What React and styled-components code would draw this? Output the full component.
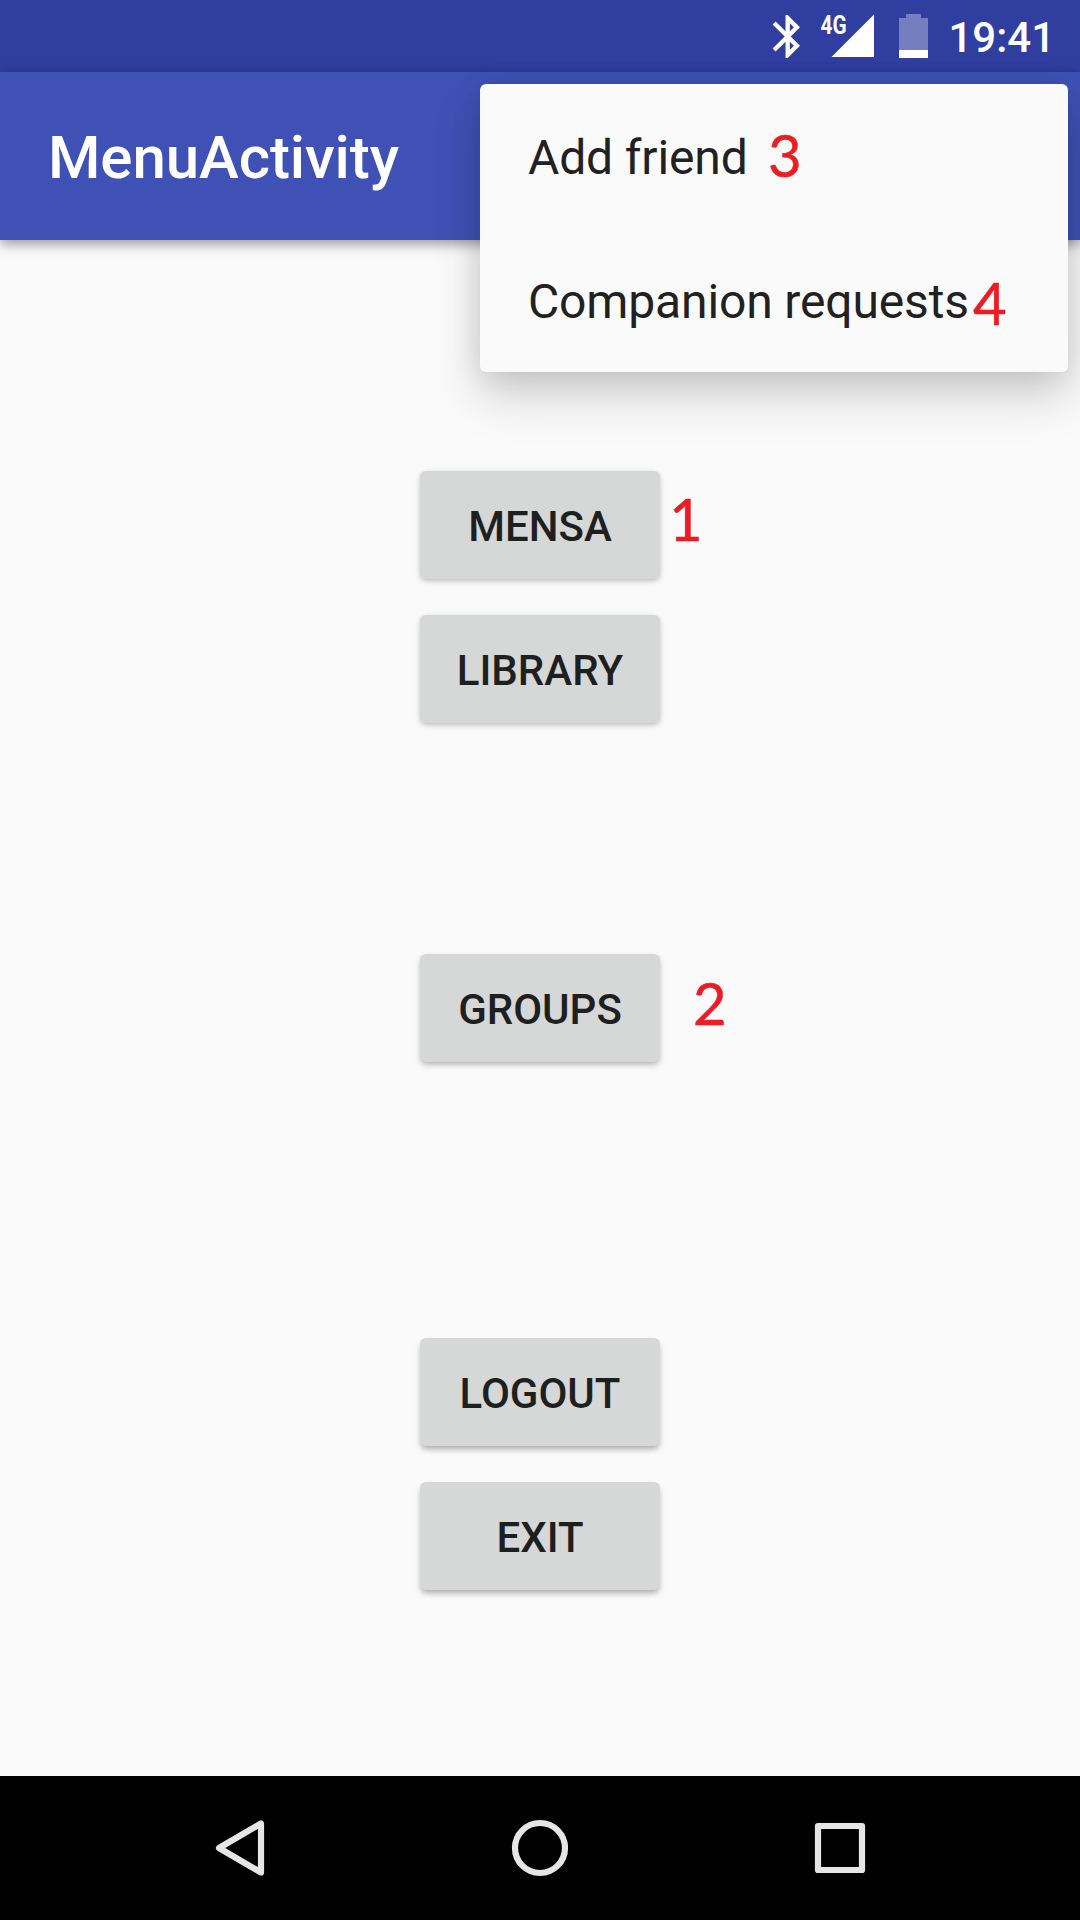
import React from "react";
import styled, { createGlobalStyle } from "styled-components";

const Global = createGlobalStyle`
  * { box-sizing: border-box; }
  html, body { margin: 0; padding: 0; background: #fafafa; }
  body { font-family: Roboto, "Noto Sans", sans-serif; }
  button { font: inherit; border: 0; margin: 0; }
`;

const Screen = styled.div`
  position: relative;
  display: flex;
  flex-direction: column;
  width: 1080px;
  height: 1920px;
  overflow: hidden;
  background: #fafafa;
`;

const StatusBar = styled.header`
  display: flex;
  align-items: center;
  justify-content: flex-end;
  flex: none;
  height: 72px;
  padding-right: 25px;
  background: #303f9f;
`;

const StatusIcon = styled.svg`
  display: block;
  flex: none;
  margin-right: ${(p) => p.$gap}px;
`;

const Clock = styled.time`
  padding-top: 3px;
  font-size: 42px;
  font-weight: 500;
  line-height: 69px;
  color: #fff;
`;

const NetworkLabel = styled.text`
  font-family: Roboto, sans-serif;
  font-size: 26px;
  font-weight: 700;
  fill: #fff;
`;

const AppBar = styled.div`
  display: flex;
  align-items: center;
  flex: none;
  height: 168px;
  padding: 4px 0 0 48px;
  background: #3f51b5;
  box-shadow: 0 4px 12px rgba(0, 0, 0, 0.4);
`;

const Title = styled.h1`
  margin: 0;
  font-size: 60px;
  font-weight: 500;
  line-height: 70px;
  letter-spacing: -0.1px;
  color: #fff;
`;

const Content = styled.main`
  display: flex;
  flex-direction: column;
  align-items: center;
  flex: 1;
  padding-top: 231px;
`;

const ButtonGroup = styled.section`
  display: flex;
  flex-direction: column;
  gap: 36px;
  margin-bottom: ${(p) => p.$after || 0}px;
`;

const ButtonRow = styled.div`
  position: relative;
  display: flex;
`;

const ActionButton = styled.button`
  width: 240px;
  height: 108px;
  padding: 3px 0 0;
  border-radius: 6px;
  background: #d6d7d7;
  box-shadow: 0 ${(p) => p.$depth}px 6px -1px rgba(0, 0, 0, 0.32);
  font-size: 42px;
  font-weight: 500;
  line-height: 50px;
  color: #1e1f1f;
  text-align: center;
`;

const Marker = styled.span`
  position: absolute;
  left: ${(p) => p.$x}px;
  top: ${(p) => p.$y}px;
  font-family: Lato, sans-serif;
  font-size: 58px;
  font-weight: 400;
  line-height: 70px;
  color: #ed1c24;
  -webkit-text-stroke: 0.5px #ed1c24;
`;

const PopupMenu = styled.div`
  position: absolute;
  top: 84px;
  left: 480px;
  display: flex;
  flex-direction: column;
  width: 588px;
  height: 288px;
  border-radius: 6px;
  background: #fafafa;
  box-shadow: 0 24px 48px rgba(0, 0, 0, 0.17), 0 4px 30px rgba(0, 0, 0, 0.1);
`;

const MenuItem = styled.div`
  position: relative;
  display: flex;
  align-items: center;
  flex: 1;
  padding-left: 48px;
  padding-top: 4px;
  font-size: 48px;
  line-height: 56px;
  letter-spacing: -0.14px;
  color: #212121;
  white-space: nowrap;
`;

const NavBar = styled.nav`
  display: flex;
  align-items: center;
  justify-content: center;
  gap: 204px;
  flex: none;
  height: 144px;
  background: #000;
`;

const NavIcon = styled.svg`
  display: block;
  width: 96px;
  height: 96px;
  fill: none;
  stroke: #e6e6e6;
  stroke-width: 6.2;
  stroke-linejoin: round;
`;

function StatusIcons() {
  return (
    <>
      <StatusIcon $gap={20} width="28" height="43" viewBox="4.7 2 13.02 20">
        <path
          d="M17.71 7.71L12 2h-1v7.59L6.41 5 5 6.41 10.59 12 5 17.59 6.41 19 11 14.41V22h1l5.71-5.71-4.3-4.29 4.3-4.29zM13 5.83l1.88 1.88L13 9.59V5.83zm1.88 10.46L13 18.17v-3.76l1.88 1.88z"
          fill="#fff"
        />
      </StatusIcon>
      <StatusIcon $gap={24} width="55" height="64" viewBox="0 -10 55 64">
        <NetworkLabel x="0.5" y="19.5" textLength="26" lengthAdjust="spacingAndGlyphs">
          4G
        </NetworkLabel>
        <path d="M54 0.5 V43 H11.5 Z" fill="#fff" />
      </StatusIcon>
      <StatusIcon $gap={20} width="29" height="44" viewBox="0 0 29 44">
        <path d="M0 4 H7 V0 H22 V4 H29 V36 H0 Z" fill="#757ebe" />
        <path d="M0 36 H29 V44 H0 Z" fill="#fff" />
      </StatusIcon>
    </>
  );
}

function Action({ label, depth, children }) {
  return (
    <ButtonRow>
      <ActionButton $depth={depth}>{label}</ActionButton>
      {children}
    </ButtonRow>
  );
}

export default function App() {
  return (
    <>
      <Global />
      <Screen>
        <StatusBar>
          <StatusIcons />
          <Clock>19:41</Clock>
        </StatusBar>
        <AppBar>
          <Title>MenuActivity</Title>
        </AppBar>
        <Content>
          <ButtonGroup $after={231}>
            <Action label="MENSA" depth={2}>
              <Marker $x={249} $y={13}>1</Marker>
            </Action>
            <Action label="LIBRARY" depth={2} />
          </ButtonGroup>
          <ButtonGroup $after={276}>
            <Action label="GROUPS" depth={3}>
              <Marker $x={273} $y={14}>2</Marker>
            </Action>
          </ButtonGroup>
          <ButtonGroup>
            <Action label="LOGOUT" depth={4} />
            <Action label="EXIT" depth={4} />
          </ButtonGroup>
        </Content>
        <NavBar>
          <NavIcon viewBox="0 0 96 96">
            <path d="M69 23.5 V72.5 L27 48 Z" />
          </NavIcon>
          <NavIcon viewBox="0 0 96 96">
            <circle cx="48" cy="48" r="25" />
          </NavIcon>
          <NavIcon viewBox="0 0 96 96">
            <rect x="26" y="26" width="44" height="44" />
          </NavIcon>
        </NavBar>
        <PopupMenu>
          <MenuItem>
            Add friend
            <Marker $x={288} $y={36}>3</Marker>
          </MenuItem>
          <MenuItem>
            Companion requests
            <Marker $x={493} $y={40}>4</Marker>
          </MenuItem>
        </PopupMenu>
      </Screen>
    </>
  );
}
